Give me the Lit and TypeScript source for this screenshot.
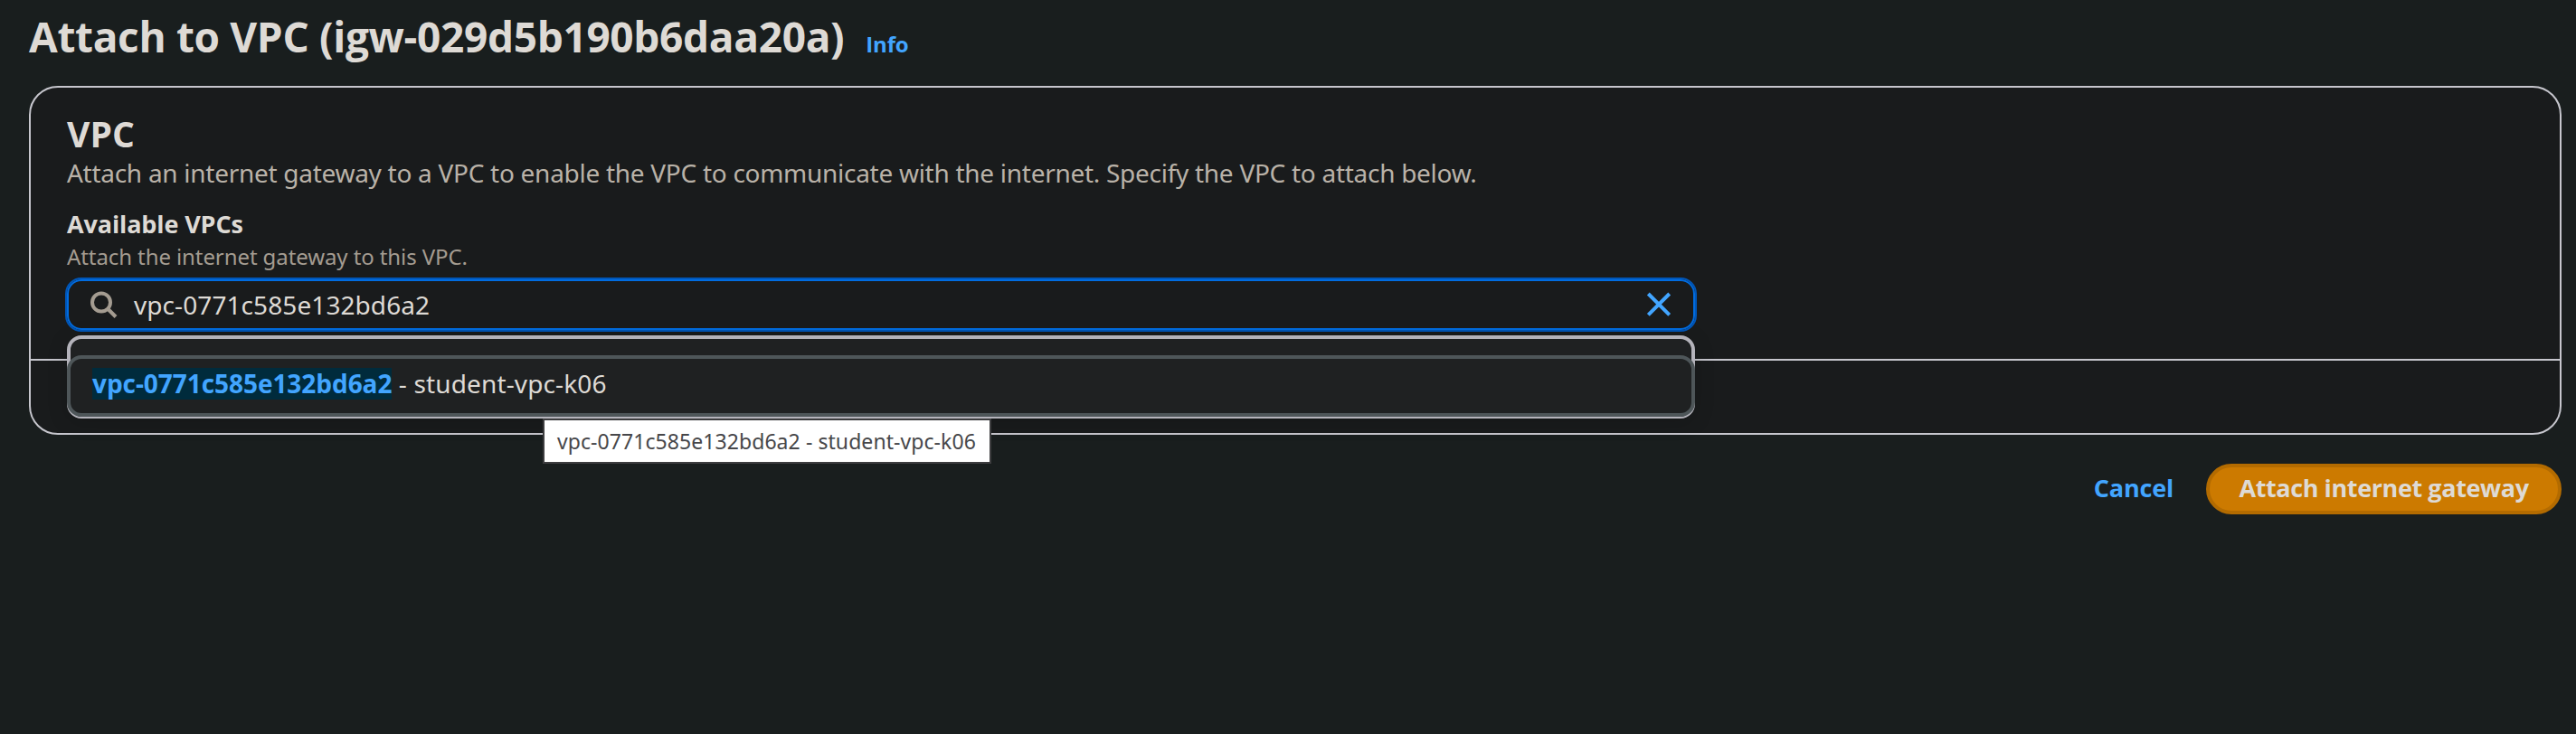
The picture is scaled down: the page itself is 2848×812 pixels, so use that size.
import { LitElement, html, css } from "lit";
import { customElement, property, state } from "lit/decorators.js";

@customElement("vpc-search")
class VpcSearch extends LitElement {
  @property() value = "";
  @property() suffix = "";

  static styles = css`
    :host {
      display: block;
      position: relative;
      width: 1804px;
      margin-left: -2px;
      font-family: "Noto Sans", "Open Sans", sans-serif;
    }
    .field {
      box-sizing: border-box;
      height: 60px;
      display: flex;
      align-items: center;
      border: 2px solid #0056b8;
      border-radius: 18px;
      box-shadow: inset 0 0 0 2px #006ce0;
      background: #191b1c;
      padding: 0 26px 0 26px;
    }
    .icon {
      display: block;
      flex: none;
    }
    .value {
      flex: 1;
      margin-left: 18px;
      font-size: 28px;
      line-height: 38px;
      padding-bottom: 1px;
      letter-spacing: 0.08px;
      color: #dedad5;
    }
    .menu {
      position: absolute;
      z-index: 1;
      top: 64px;
      left: 2px;
      box-sizing: border-box;
      width: 1800px;
      height: 92px;
      border: 4px solid #b4b3bb;
      border-bottom-width: 2px;
      border-radius: 16px;
      background: #1f2122;
      box-shadow: 0 4px 22px 1px rgba(0, 0, 0, 0.14);
      padding-top: 18px;
    }
    .option {
      box-sizing: border-box;
      height: 68px;
      margin: 0 -4px;
      border: 4px solid #4e5659;
      border-radius: 16px;
      background: #1f2122;
      display: flex;
      align-items: center;
      padding: 0 0 6px 24px;
      font-size: 28px;
      line-height: 35px;
      color: #dedad5;
      white-space: pre;
      letter-spacing: 0.14px;
    }
    .match {
      font-family: "Open Sans", sans-serif;
      font-weight: 700;
      letter-spacing: -0.05px;
      background: #002b3c;
      color: #42a5ff;
      height: 35px;
    }
    .tip {
      position: absolute;
      z-index: 2;
      left: 528px;
      top: 156px;
      box-sizing: border-box;
      width: 496px;
      height: 50px;
      border: 2px solid #3d3d3f;
      background: #fff;
      color: #47474a;
      padding-left: 14px;
      font-size: 23px;
      line-height: 47px;
      letter-spacing: 0.07px;
      white-space: nowrap;
    }
  `;

  render() {
    return html`
      <div class="field">
        <svg class="icon" width="30" height="30" viewBox="0 0 30 30" fill="none" stroke="#a49c91" stroke-width="4">
          <circle cx="12" cy="12.5" r="10" />
          <path d="M19 19.5l9 9" />
        </svg>
        <span class="value">${this.value}</span>
        <svg class="icon" width="28" height="28" viewBox="0 0 28 28" fill="none" stroke="#42a5ff" stroke-width="4">
          <path d="M2.3 2l23.4 23.4M25.7 2L2.3 25.4" />
        </svg>
      </div>
      <div class="menu">
        <div class="option"><span class="match">${this.value}</span><span> - ${this.suffix}</span></div>
      </div>
      <div class="tip">${this.value} - ${this.suffix}</div>
    `;
  }
}

@customElement("app-root")
class AppRoot extends LitElement {
  @state() gateway = "igw-029d5b190b6daa20a";

  static styles = css`
    :host {
      display: block;
      box-sizing: border-box;
      height: 812px;
      padding: 0 16px 0 32px;
      background: #191e1e;
      color: #dedad5;
      font-family: "Open Sans", "Noto Sans", sans-serif;
    }
    .header {
      height: 95px;
      display: flex;
      align-items: baseline;
      line-height: 80px;
    }
    .title {
      margin: 0;
      font-size: 46px;
      font-weight: 700;
      letter-spacing: -0.34px;
    }
    .info {
      margin-left: 24px;
      font-size: 24px;
      font-weight: 700;
      letter-spacing: -0.17px;
      color: #42a5ff;
    }
    .card {
      box-sizing: border-box;
      border: 2px solid #c6c6cd;
      border-radius: 32px;
      background: #191b1c;
    }
    .body {
      box-sizing: border-box;
      height: 300px;
      padding: 26px 40px 0;
    }
    .name {
      margin: 0;
      font-size: 39px;
      line-height: 50px;
      font-weight: 700;
      letter-spacing: 0.1px;
    }
    .desc {
      font-family: "Noto Sans", sans-serif;
      font-size: 28px;
      line-height: 36px;
      letter-spacing: -0.28px;
      color: #b9b2a8;
    }
    .label {
      margin-top: 21px;
      font-size: 27px;
      line-height: 36px;
      font-weight: 700;
      letter-spacing: -0.12px;
    }
    .hint {
      margin: 2px 0 7px;
      font-family: "Noto Sans", sans-serif;
      font-size: 24px;
      line-height: 32px;
      letter-spacing: -0.09px;
      color: #a49c91;
    }
    .foot {
      height: 80px;
      border-top: 2px solid #c6c6cd;
    }
    .actions {
      margin-top: 32px;
      display: flex;
      justify-content: flex-end;
      align-items: flex-start;
      font-size: 27px;
      font-weight: 700;
    }
    .cancel {
      margin-right: 36px;
      line-height: 54px;
      color: #42a5ff;
      letter-spacing: -0.2px;
    }
    .primary {
      box-sizing: border-box;
      width: 393px;
      height: 56px;
      border: 4px solid #b36b00;
      border-radius: 28px;
      background: #cc7a00;
      line-height: 46px;
      text-align: center;
      letter-spacing: -0.4px;
    }
  `;

  render() {
    return html`
      <div class="header">
        <h1 class="title">Attach to VPC (${this.gateway})</h1>
        <span class="info">Info</span>
      </div>
      <div class="card">
        <div class="body">
          <h2 class="name">VPC</h2>
          <div class="desc">Attach an internet gateway to a VPC to enable the VPC to communicate with the internet. Specify the VPC to attach below.</div>
          <div class="label">Available VPCs</div>
          <div class="hint">Attach the internet gateway to this VPC.</div>
          <vpc-search value="vpc-0771c585e132bd6a2" suffix="student-vpc-k06"></vpc-search>
        </div>
        <div class="foot"></div>
      </div>
      <div class="actions">
        <span class="cancel">Cancel</span>
        <div class="primary">Attach internet gateway</div>
      </div>
    `;
  }
}
